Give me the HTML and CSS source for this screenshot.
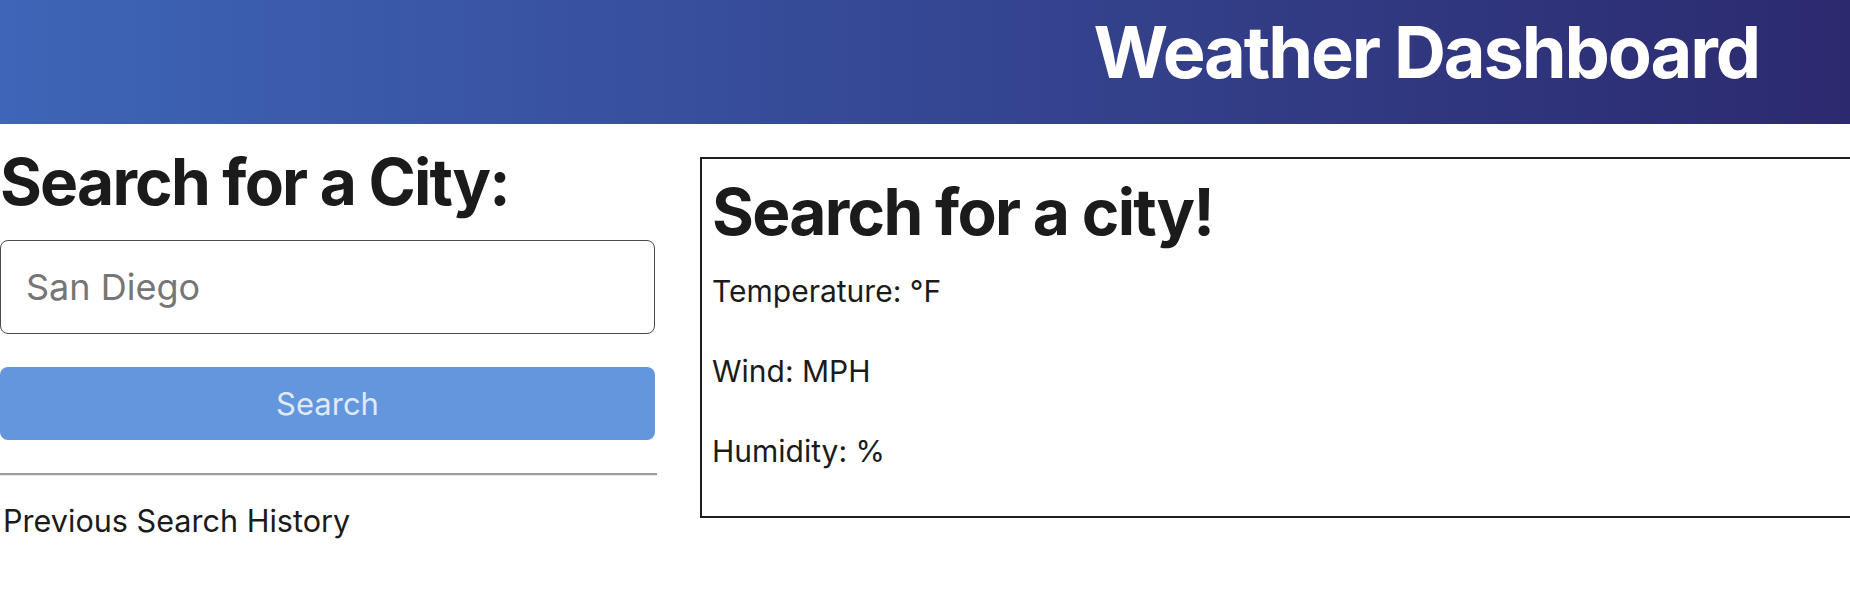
FILE: index.html
```html
<!DOCTYPE html>
<html lang="en">
<head>
<meta charset="utf-8">
<title>Weather Dashboard</title>
<link rel="stylesheet" href="styles.css">
</head>
<body>
<header class="topbar">
  <h1 class="brand">Weather Dashboard</h1>
</header>
<main class="layout">
  <section class="search-panel">
    <h2 class="panel-title">Search for a City:</h2>
    <input class="city-input" type="text" placeholder="San Diego">
    <button class="search-btn" type="button">Search</button>
    <hr class="divider">
    <p class="history-label">Previous Search History</p>
  </section>
  <section class="weather-card">
    <h2 class="card-title">Search for a city!</h2>
    <p class="stat">Temperature: °F</p>
    <p class="stat">Wind: MPH</p>
    <p class="stat">Humidity: %</p>
  </section>
</main>
</body>
</html>
```
FILE: styles.css
```css
* {
  box-sizing: border-box;
}

html, body {
  margin: 0;
  padding: 0;
  background: #ffffff;
  overflow: hidden;
}

body {
  font-family: Inter, "Liberation Sans", sans-serif;
  color: #1b1b1b;
}

.topbar {
  height: 124px;
  padding: 8px 91px 0 0;
  background: linear-gradient(to right, #3e65b8 0%, #354793 50%, #2c2a6f 100%);
  text-align: right;
}

.brand {
  margin: 0;
  font-size: 72px;
  font-weight: 700;
  line-height: normal;
  letter-spacing: -2.1px;
  color: #ffffff;
}

.layout {
  display: flex;
  align-items: flex-start;
  gap: 43px;
}

.search-panel {
  flex: 0 0 657px;
  width: 657px;
  padding-top: 19px;
}

.panel-title {
  margin: 0;
  font-size: 64px;
  font-weight: 700;
  line-height: normal;
  letter-spacing: -1.8px;
  color: #1b1b1b;
}

.city-input {
  display: block;
  width: 655px;
  height: 94px;
  margin-top: 20px;
  padding: 0 25px;
  border: 1px solid #4a4a4a;
  border-radius: 8px;
  font-family: Inter, "Liberation Sans", sans-serif;
  font-size: 36px;
  color: #1b1b1b;
  background: #ffffff;
  outline: none;
}

.city-input::placeholder {
  color: #767676;
}

.search-btn {
  display: block;
  width: 655px;
  height: 73px;
  margin-top: 33px;
  border: none;
  border-radius: 8px;
  background: #6496de;
  color: #dfeaf8;
  font-family: Inter, "Liberation Sans", sans-serif;
  font-size: 31px;
  cursor: pointer;
}

.divider {
  width: 657px;
  height: 0;
  margin: 33px 0 0;
  border: 0;
  border-top: 2px solid #9b9b9b;
  border-bottom: 1px solid #e8e8e8;
}

.history-label {
  margin: 27px 0 0 3px;
  font-size: 30.6px;
  line-height: 36px;
}

.weather-card {
  flex: 0 0 1300px;
  width: 1300px;
  margin-top: 33px;
  padding: 14px 10px 47px;
  border: 2px solid #1e1e1e;
}

.card-title {
  margin: 0 0 23px;
  font-size: 64px;
  font-weight: 700;
  line-height: normal;
  letter-spacing: -1.7px;
  color: #1b1b1b;
}

.stat {
  margin: 0 0 44px;
  font-size: 30px;
  line-height: 36px;
}

.stat:last-child {
  margin-bottom: 0;
}
```
